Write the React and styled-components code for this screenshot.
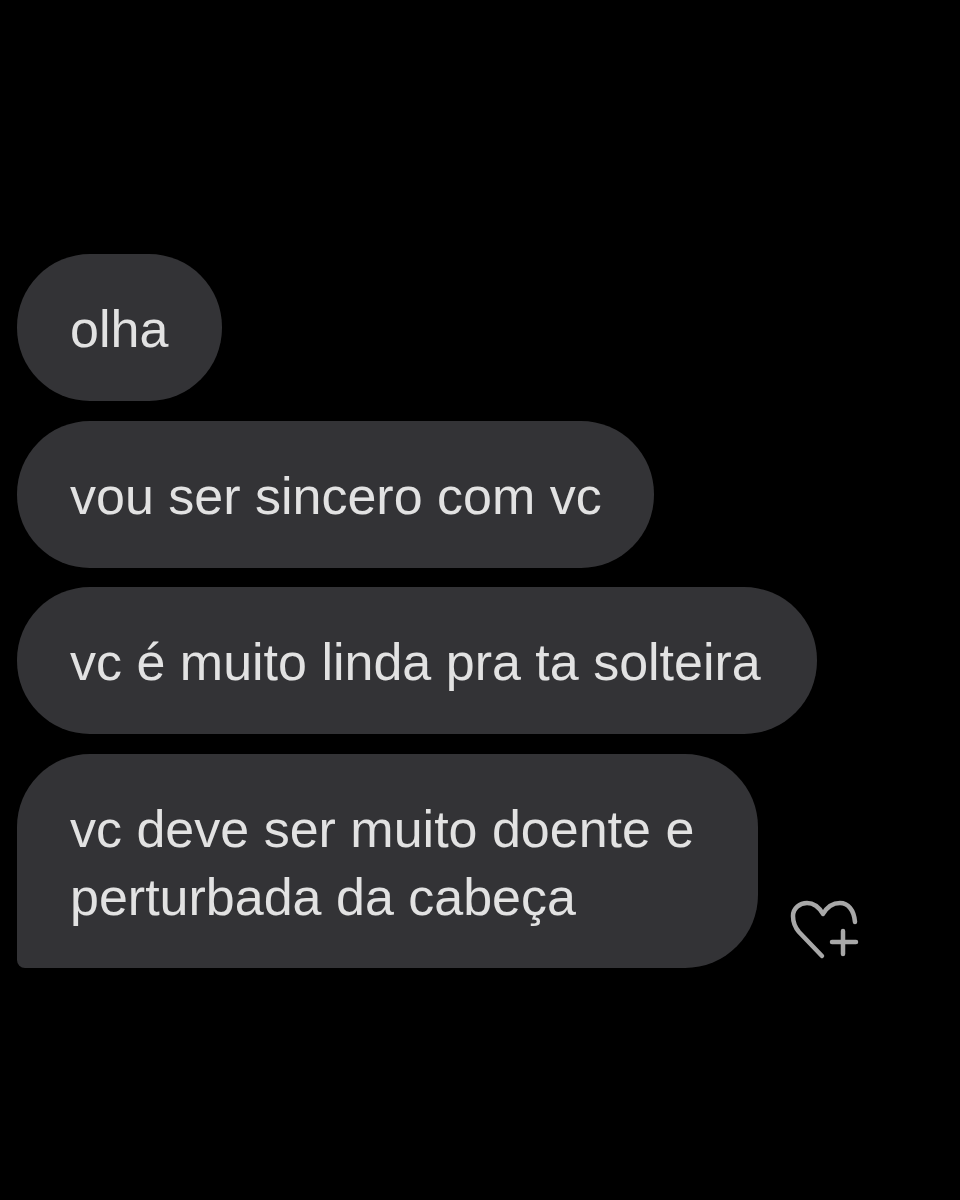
import React from 'react';
import styled, { createGlobalStyle } from 'styled-components';

const Global = createGlobalStyle`
  html, body { margin: 0; padding: 0; background: #000; }
`;

const Screen = styled.div`
  width: 960px;
  height: 1200px;
  background: #000;
  padding: 254px 0 0 17px;
  box-sizing: border-box;
  display: flex;
  flex-direction: column;
  gap: 19.5px;
  font-family: "Liberation Sans", "Roboto", sans-serif;
`;

const Row = styled.div`
  display: flex;
  align-items: flex-end;
`;

const Bubble = styled.div`
  background: #333336;
  color: #e2e2e2;
  font-size: 52px;
  line-height: 68px;
  padding: 41px ${p => p.$right || 54}px 38px 53px;
  border-radius: 73px;
  white-space: pre-line;
  ${p => p.$last && 'border-bottom-left-radius: 8px; padding-bottom: 37px;'}
`;

const HeartButton = styled.svg`
  width: 70px;
  height: 62px;
  margin: 0 0 6px 32px;
  fill: none;
  stroke: #a8a8a8;
  stroke-width: 4.5;
  stroke-linecap: round;
  stroke-linejoin: round;
`;

export default function App() {
  return (
    <Screen>
      <Global />
      <Row><Bubble>olha</Bubble></Row>
      <Row><Bubble $right={52}>vou ser sincero com vc</Bubble></Row>
      <Row><Bubble $right={56}>vc é muito linda pra ta solteira</Bubble></Row>
      <Row>
        <Bubble $last $right={64}>{'vc deve ser muito doente e\nperturbada da cabeça'}</Bubble>
        <HeartButton viewBox="30 20 70 62">
          <path d="M62 76 L39 52 C33 45 33 38 33 36 C33 28 40 23 47 23 C54 23 59 27 63 34 C67 27 72 23 80 23 C88 23 94 30 95 42" />
          <path d="M83 51 V74 M72 62 H96" />
        </HeartButton>
      </Row>
    </Screen>
  );
}
